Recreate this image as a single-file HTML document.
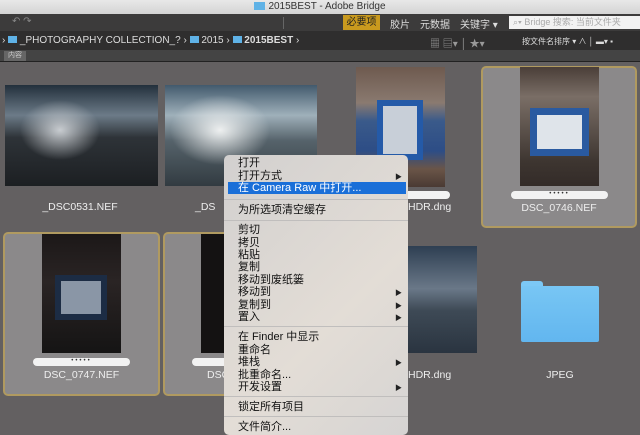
<!DOCTYPE html>
<html><head><meta charset="utf-8"><style>
*{margin:0;padding:0;box-sizing:border-box}
body{width:640px;height:430px;overflow:hidden;background:#636061;font-family:"Liberation Sans","Noto Sans CJK SC",sans-serif;position:relative}
.abs{position:absolute}
.title{left:0;top:0;width:640px;height:14px;background:linear-gradient(#e8e8e8,#d4d4d4);font-size:10px;color:#333;text-align:center;line-height:14px}
.tb{left:0;top:14px;width:640px;height:17px;background:#3c3b3b;color:#ddd;font-size:10px}
.pb{left:0;top:31px;width:640px;height:19px;background:#2f2e2e;color:#ddd;font-size:10px}
.tab{left:0;top:50px;width:640px;height:12px;background:#444;border-bottom:1px solid #222}
.cell{border:2px solid #b09a60;border-radius:5px;background:#8b898a}
.lbl{color:#eee;font-size:10.5px;text-align:center}
.pill{background:#f2f2f2;border-radius:5px;height:8px;font-size:6px;line-height:6px;text-align:center;color:#333;letter-spacing:2px}
.menu{left:224px;top:155px;width:184px;height:280px;background:linear-gradient(135deg,#d2d0cf,#e3ddd6 60%,#d6d4d3);border-radius:5px;font-size:11px;color:#111}
.it{position:absolute;left:14px;height:12px;line-height:12px}
.ar{position:absolute;left:171px;font-size:7px;color:#222}
.sep{position:absolute;left:0;width:184px;height:1px;background:#c0bebd}
</style></head><body>
<div class="abs title"><span style="display:inline-block;width:11px;height:8px;background:#5fb2e6;vertical-align:-1px;margin-right:3px"></span>2015BEST - Adobe Bridge</div>
<div class="abs tb">
 <span class="abs" style="left:12px;top:2px;color:#888">↶ ↷</span>
 <div class="abs" style="left:283px;top:3px;width:1px;height:12px;background:#666"></div>
 <div class="abs" style="left:343px;top:1px;width:37px;height:15px;background:#c99a1e;color:#222;font-size:10px;text-align:center;line-height:15px">必要项</div>
 <span class="abs" style="left:390px;top:2px">胶片</span>
 <span class="abs" style="left:420px;top:2px">元数据</span>
 <span class="abs" style="left:460px;top:2px">关键字 ▾</span>
 <div class="abs" style="left:509px;top:2px;width:131px;height:13px;background:#f2f2f2;color:#aaa;font-size:9px;line-height:13px;padding-left:4px">⌕▾ Bridge 搜索: 当前文件夹</div>
</div>
<div class="abs pb">
 <span class="abs" style="left:2px;top:4px">› <span style="display:inline-block;width:9px;height:7px;background:#5fb2e6"></span> _PHOTOGRAPHY COLLECTION_? › <span style="display:inline-block;width:9px;height:7px;background:#5fb2e6"></span> 2015 › <span style="display:inline-block;width:9px;height:7px;background:#5fb2e6"></span> <b>2015BEST</b> ›</span>
 <span class="abs" style="left:430px;top:4px;color:#999">▦ ▤▾ │ ★▾</span>
 <span class="abs" style="left:522px;top:5px;font-size:8px">按文件名排序 ▾ ∧ │ ▬▾ ▪</span>
</div>
<div class="abs tab"><div class="abs" style="left:4px;top:1px;width:22px;height:10px;background:#666;color:#ccc;font-size:7px;text-align:center;line-height:10px">内容</div></div>

<!-- row 1 -->
<div class="abs" style="left:5px;top:85px;width:153px;height:101px;background:radial-gradient(ellipse 40px 30px at 55px 45px,#c8ccd0,transparent),linear-gradient(#23303c 0%,#6c7b88 30%,#2e3338 52%,#1c1f22 100%)"></div>
<div class="abs lbl" style="left:0;top:201px;width:160px">_DSC0531.NEF</div>
<div class="abs" style="left:165px;top:85px;width:152px;height:101px;background:radial-gradient(ellipse 50px 35px at 55px 45px,#eef0f0,transparent),linear-gradient(#425a6d 0%,#9fb0ba 30%,#56636b 55%,#323b41 100%)"></div>
<div class="abs lbl" style="left:195px;top:201px;width:40px;text-align:left">_DS</div>
<div class="abs" style="left:356px;top:67px;width:89px;height:120px;background:linear-gradient(#6e5a4f,#8a7a70 30%,#3a5a8a 45%,#2d4d86 70%,#6a5548 85%,#4a3a33)"></div>
<div class="abs" style="left:377px;top:100px;width:46px;height:60px;background:#c8cfd8;border:6px solid #245aa8"></div>
<div class="abs pill" style="left:400px;top:191px;width:50px"></div>
<div class="abs lbl" style="left:408px;top:201px">HDR.dng</div>
<div class="abs cell" style="left:481px;top:66px;width:156px;height:162px"></div>
<div class="abs" style="left:520px;top:67px;width:79px;height:119px;background:linear-gradient(#4a3e38,#7a6e66 25%,#3d3530 80%,#332b28)"></div>
<div class="abs" style="left:530px;top:108px;width:59px;height:48px;background:#dfe4ea;border:7px solid #2a5aa0"></div>
<div class="abs pill" style="left:511px;top:191px;width:97px">•••••</div>
<div class="abs lbl" style="left:481px;top:202px;width:156px">DSC_0746.NEF</div>

<!-- row 2 -->
<div class="abs cell" style="left:3px;top:232px;width:157px;height:164px"></div>
<div class="abs" style="left:42px;top:234px;width:79px;height:119px;background:linear-gradient(#1c1818,#2a2424 40%,#151414)"></div>
<div class="abs" style="left:55px;top:275px;width:52px;height:45px;background:#8a96a6;border:6px solid #1c2c44"></div>
<div class="abs pill" style="left:33px;top:358px;width:97px">•••••</div>
<div class="abs lbl" style="left:3px;top:369px;width:157px">DSC_0747.NEF</div>
<div class="abs cell" style="left:163px;top:232px;width:70px;height:164px"></div>
<div class="abs" style="left:201px;top:234px;width:30px;height:119px;background:#141212"></div>
<div class="abs pill" style="left:192px;top:358px;width:40px"></div>
<div class="abs lbl" style="left:207px;top:369px">DSC</div>
<div class="abs" style="left:408px;top:246px;width:69px;height:107px;background:linear-gradient(#2e3f52,#6a7888 40%,#3e4a56 60%,#2a3440)"></div>
<div class="abs lbl" style="left:408px;top:369px">HDR.dng</div>
<div class="abs" style="left:521px;top:281px;width:22px;height:8px;background:#7cc8f5;border-radius:3px 3px 0 0"></div>
<div class="abs" style="left:521px;top:286px;width:78px;height:56px;background:linear-gradient(#78c6f4,#62b6ef);border-radius:2px"></div>
<div class="abs lbl" style="left:521px;top:369px;width:78px">JPEG</div>

<div class="abs menu">
 <div class="it" style="top:2px">打开</div>
 <div class="it" style="top:15px">打开方式</div><div class="ar" style="top:17px">▶</div>
 <div class="abs" style="left:4px;top:27px;width:178px;height:12px;background:#1a6fd8"></div>
 <div class="it" style="top:27px;color:#fff">在 Camera Raw 中打开...</div>
 <div class="sep" style="top:44px"></div>
 <div class="it" style="top:49px">为所选项清空缓存</div>
 <div class="sep" style="top:65px"></div>
 <div class="it" style="top:69px">剪切</div>
 <div class="it" style="top:82px">拷贝</div>
 <div class="it" style="top:94px">粘贴</div>
 <div class="it" style="top:106px">复制</div>
 <div class="it" style="top:119px">移动到废纸篓</div>
 <div class="it" style="top:131px">移动到</div><div class="ar" style="top:133px">▶</div>
 <div class="it" style="top:144px">复制到</div><div class="ar" style="top:146px">▶</div>
 <div class="it" style="top:156px">置入</div><div class="ar" style="top:158px">▶</div>
 <div class="sep" style="top:171px"></div>
 <div class="it" style="top:176px">在 Finder 中显示</div>
 <div class="it" style="top:189px">重命名</div>
 <div class="it" style="top:201px">堆栈</div><div class="ar" style="top:203px">▶</div>
 <div class="it" style="top:214px">批重命名...</div>
 <div class="it" style="top:226px">开发设置</div><div class="ar" style="top:228px">▶</div>
 <div class="sep" style="top:241px"></div>
 <div class="it" style="top:246px">锁定所有项目</div>
 <div class="sep" style="top:261px"></div>
 <div class="it" style="top:266px">文件简介...</div>
</div>
</body></html>
